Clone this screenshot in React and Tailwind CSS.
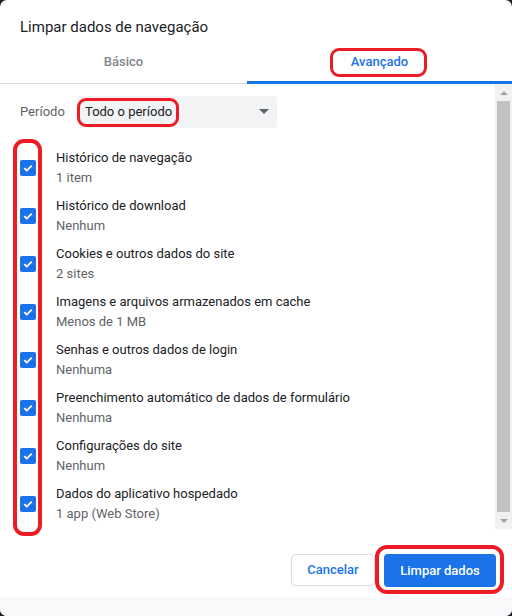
import React from 'react'

const items = [
  ['Histórico de navegação', '1 item'],
  ['Histórico de download', 'Nenhum'],
  ['Cookies e outros dados do site', '2 sites'],
  ['Imagens e arquivos armazenados em cache', 'Menos de 1 MB'],
  ['Senhas e outros dados de login', 'Nenhuma'],
  ['Preenchimento automático de dados de formulário', 'Nenhuma'],
  ['Configurações do site', 'Nenhum'],
  ['Dados do aplicativo hospedado', '1 app (Web Store)'],
]

function Check() {
  return (
    <div className="w-4 h-4 rounded-[2px] bg-[#1a73e8] flex items-center justify-center shrink-0">
      <svg width="12" height="12" viewBox="0 0 12 12">
        <path d="M2.3 6.2 L4.8 8.6 L9.7 3.6" fill="none" stroke="white" strokeWidth="1.8" />
      </svg>
    </div>
  )
}

export default function App() {
  return (
    <div className="w-[512px] h-[616px] bg-[#202124] relative" style={{ fontFamily: 'Roboto, "Liberation Sans", sans-serif' }}>
      <div className="w-full h-full bg-white rounded-[7px] flex flex-col overflow-hidden">
        {/* título */}
        <div className="h-[45px] pl-5 pt-[17px] text-[15px] leading-[20px] text-[#202124]">
          Limpar dados de navegação
        </div>

        {/* abas */}
        <div className="flex h-[39px]">
          <div className="w-[247px] flex items-center justify-center text-[13px] font-medium text-[#80868b] border-b border-[#dadce0] pb-[4px]">
            Básico
          </div>
          <div className="flex-1 flex items-center justify-center text-[13px] font-medium text-[#1a73e8] border-b-[3px] border-[#1a73e8] pb-[2px]">
            Avançado
          </div>
        </div>

        {/* conteúdo */}
        <div className="flex h-[445px]">
          <div className="flex-1 pl-5">
            <div className="flex items-center h-[32px] mt-[12px] mb-[16px]">
              <span className="text-[13px] text-[#5f6368] w-[57px]">Período</span>
              <div className="w-[200px] h-[32px] bg-[#f1f3f4] rounded-[4px] flex items-center justify-between pl-2 pr-[7px]">
                <span className="text-[13px] text-[#202124]">Todo o período</span>
                <svg width="12" height="6" viewBox="0 0 12 6"><path d="M1 0 L11 0 L6 5 Z" fill="#5f6368" /></svg>
              </div>
            </div>
            <div className="flex flex-col">
              {items.map(([t, s]) => (
                <div key={t} className="flex items-center h-[48px]">
                  <Check />
                  <div className="ml-5 flex flex-col text-[13px] leading-[20px]">
                    <span className="text-[#202124]">{t}</span>
                    <span className="text-[#5f6368]">{s}</span>
                  </div>
                </div>
              ))}
            </div>
          </div>
          {/* barra de rolagem */}
          <div className="w-[17px] bg-[#f1f1f1] flex flex-col items-center">
            <div className="h-[17px] flex items-center justify-center">
              <svg width="8" height="4" viewBox="0 0 8 4"><path d="M0 4 L8 4 L4 0 Z" fill="#a3a3a3" /></svg>
            </div>
            <div className="w-[13px] flex-1 bg-[#c1c1c1]" />
            <div className="h-[17px] flex items-center justify-center">
              <svg width="8" height="4" viewBox="0 0 8 4"><path d="M0 0 L8 0 L4 4 Z" fill="#a3a3a3" /></svg>
            </div>
          </div>
        </div>

        {/* rodapé */}
        <div className="flex-1 flex justify-end items-start pt-[25px] pr-4 gap-[9px]">
          <button className="h-[32px] w-[84px] rounded-[4px] border border-[#dadce0] text-[13px] font-medium text-[#1a73e8] bg-white">
            Cancelar
          </button>
          <button className="h-[33px] w-[112px] rounded-[4px] bg-[#1a73e8] text-[13px] font-medium text-white">
            Limpar dados
          </button>
        </div>
        <div className="h-[19px] bg-[#f8f9fa]" />
      </div>

      {/* marcações em vermelho */}
      <div className="absolute left-[330px] top-[48px] w-[97px] h-[29px] border-[3px] border-[#ed1c24] rounded-[9px]" />
      <div className="absolute left-[77px] top-[98px] w-[102px] h-[29px] border-[3px] border-[#ed1c24] rounded-[9px]" />
      <div className="absolute left-[13px] top-[139px] w-[29px] h-[397px] border-[4px] border-[#ed1c24] rounded-[11px]" />
      <div className="absolute left-[375px] top-[545px] w-[129px] h-[49px] border-[4px] border-[#ed1c24] rounded-[12px]" />
    </div>
  )
}
